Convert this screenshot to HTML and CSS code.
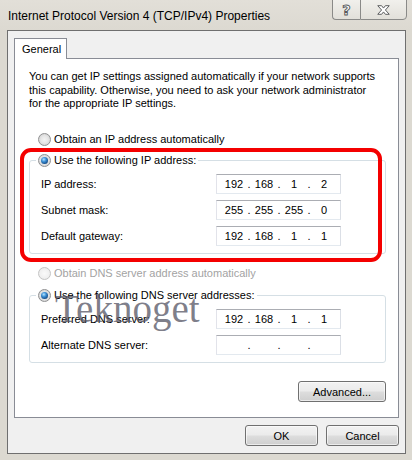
FILE: index.html
```html
<!DOCTYPE html>
<html>
<head>
<meta charset="utf-8">
<link rel="stylesheet" href="styles.css">
</head>
<body>
<div class="window">
  <div class="titlebar">
    <span class="title">Internet Protocol Version 4 (TCP/IPv4) Properties</span>
    <div class="caption-btns">
      <div class="cbtn help">
        <svg width="28" height="20" viewBox="0 0 28 20"><text x="14" y="15" text-anchor="middle" class="qmark">?</text></svg>
      </div>
      <div class="cbtn close">
        <svg width="47" height="20" viewBox="0 0 47 20"><path d="M17.5 5.5h4l2 2.5 2-2.5h4l-4 4.5 4 4.5h-4l-2-2.5-2 2.5h-4l4-4.5z" fill="#fff" stroke="#58595b" stroke-width="1" stroke-linejoin="round"/></svg>
      </div>
    </div>
  </div>
  <div class="client">
    <div class="tabs"><div class="tab">General</div></div>
    <div class="panel">
      <p class="intro">You can get IP settings assigned automatically if your network supports<br>this capability. Otherwise, you need to ask your network administrator<br>for the appropriate IP settings.</p>
      <div class="radio-row first"><span class="radio"></span>Obtain an IP address automatically</div>
      <fieldset class="group g1">
        <legend><span class="radio checked"></span>Use the following IP address:</legend>
        <div class="rows">
          <div class="row"><span class="lbl">IP address:</span><div class="ip"><span>192</span><i>.</i><span>168</span><i>.</i><span>1</span><i>.</i><span>2</span></div></div>
          <div class="row"><span class="lbl">Subnet mask:</span><div class="ip"><span>255</span><i>.</i><span>255</span><i>.</i><span>255</span><i>.</i><span>0</span></div></div>
          <div class="row"><span class="lbl">Default gateway:</span><div class="ip"><span>192</span><i>.</i><span>168</span><i>.</i><span>1</span><i>.</i><span>1</span></div></div>
        </div>
      </fieldset>
      <div class="radio-row dns disabled"><span class="radio"></span>Obtain DNS server address automatically</div>
      <fieldset class="group g2">
        <legend><span class="radio checked"></span>Use the following DNS server addresses:</legend>
        <div class="rows">
          <div class="row"><span class="lbl">Preferred DNS server:</span><div class="ip"><span>192</span><i>.</i><span>168</span><i>.</i><span>1</span><i>.</i><span>1</span></div></div>
          <div class="row"><span class="lbl">Alternate DNS server:</span><div class="ip"><span></span><i>.</i><span></span><i>.</i><span></span><i>.</i><span></span></div></div>
        </div>
      </fieldset>
      <div class="adv-row"><button class="btn adv">Advanced...</button></div>
    </div>
    <div class="footer">
      <button class="btn">OK</button>
      <button class="btn">Cancel</button>
    </div>
  </div>
  <div class="highlight"></div>
  <div class="watermark">Teknoget</div>
</div>
</body>
</html>
```
FILE: styles.css
```css
* { box-sizing: border-box; }
html, body { margin: 0; padding: 0; }
body {
  width: 412px;
  height: 460px;
  overflow: hidden;
  font-family: "Liberation Sans", Arial, sans-serif;
  font-size: 11px;
  color: #000;
}
.window {
  position: relative;
  width: 412px;
  height: 460px;
  background: #dcd9d1;
  display: flex;
  flex-direction: column;
}
.titlebar {
  height: 30px;
  display: flex;
  align-items: flex-start;
  padding: 0 5px 0 8px;
  background: linear-gradient(#e2dfd8, #dcd9d1);
}
.title {
  align-self: center;
  font-size: 12px;
  color: #000;
  margin-top: 1px;
}
.caption-btns {
  margin-left: auto;
  display: flex;
  height: 21px;
  margin-top: -1px;
}
.cbtn {
  height: 21px;
  border: 1px solid #8a8a88;
  background: linear-gradient(#f1f0ec, #e2e0da);
  display: flex;
  align-items: center;
  justify-content: center;
}
.cbtn.help {
  width: 28px;
  border-right: none;
  border-radius: 0 0 0 4px;
}
.cbtn.close {
  width: 47px;
  border-radius: 0 0 4px 0;
}
.qmark {
  font-family: "DejaVu Sans", sans-serif;
  font-size: 15px;
  font-weight: bold;
  fill: #fff;
  stroke: #5a5b5d;
  stroke-width: 1;
}
.client {
  flex: 1;
  margin: 0 6px 6px 7px;
  border: 1px solid #6f6f6f;
  background: #f0f0f0;
  padding: 7px 6px 7px 6px;
  display: flex;
  flex-direction: column;
}
.tabs {
  display: flex;
}
.tab {
  position: relative;
  z-index: 1;
  width: 53px;
  height: 21px;
  margin-bottom: -1px;
  border: 1px solid #898c95;
  border-bottom: none;
  background: #fff;
  padding: 4px 0 0 7px;
  line-height: 13px;
}
.panel {
  border: 1px solid #898c95;
  background: #fff;
  padding: 11px 0 15px 14px;
  display: flex;
  flex-direction: column;
}
.intro {
  margin: 0;
  line-height: 13.5px;
}
.radio-row {
  display: flex;
  align-items: center;
  height: 13px;
  line-height: 13px;
  padding-left: 9px;
}
.radio-row.first { margin-top: 22.5px; }
.radio-row.dns { margin-top: 13px; }
.disabled { color: #a3a3a3; }
.radio {
  width: 13px;
  height: 13px;
  border-radius: 50%;
  border: 1px solid #8f9091;
  background: radial-gradient(circle at 50% 50%, #f3f3f3 0, #e6e6e6 45%, #c9c9c9 100%);
  margin-right: 3px;
  flex: none;
  position: relative;
}
.disabled .radio {
  border-color: #c4c4c4;
  background: radial-gradient(circle at 50% 50%, #fafafa 0, #f0f0f0 60%, #e2e2e2 100%);
}
.radio.checked::after {
  content: "";
  position: absolute;
  left: 2px;
  top: 2px;
  width: 7px;
  height: 7px;
  border-radius: 50%;
  background: radial-gradient(circle at 40% 35%, #b5e6ff 0, #3f91d6 35%, #124a86 75%, #0b2d57 100%);
}
.group {
  margin: 8px 12px 0 0;
  border: 1px solid #d5dfe5;
  border-radius: 3px;
  padding: 7px 0 7px 11px;
  min-width: 0;
}
.g2 { margin-top: 9px; }
.group legend {
  display: flex;
  align-items: center;
  height: 13px;
  line-height: 13px;
  padding: 0 2px 0 2px;
  margin-left: -5px;
}
.rows {
  display: flex;
  flex-direction: column;
  gap: 6px;
}
.row {
  display: grid;
  grid-template-columns: 175px 125px;
  align-items: center;
  height: 20px;
}
.ip {
  height: 20px;
  border: 1px solid;
  border-color: #abadb3 #dbdfe6 #e3e9ef #e2e3ea;
  background: #fff;
  display: flex;
  align-items: center;
  padding: 0 2px 0 4px;
}
.ip span {
  width: 26px;
  text-align: center;
}
.ip i {
  font-style: normal;
  width: 4px;
  text-align: center;
}
.adv-row {
  display: flex;
  justify-content: flex-end;
  margin-top: 18px;
  padding-right: 12px;
}
.btn {
  font-family: "Liberation Sans", Arial, sans-serif;
  font-size: 11px;
  color: #000;
  height: 21px;
  width: 73px;
  border: 1px solid #707070;
  border-radius: 3px;
  background: linear-gradient(#f2f2f2 0%, #ebebeb 48%, #dddddd 52%, #cfcfcf 100%);
  box-shadow: inset 0 0 0 1px rgba(255,255,255,0.6);
  padding: 0;
}
.btn.adv { width: 88px; }
.footer {
  display: flex;
  justify-content: flex-end;
  gap: 8px;
  margin-top: 7px;
}
.highlight {
  position: absolute;
  left: 20px;
  top: 148px;
  width: 362px;
  height: 114px;
  border: 4px solid #f40000;
  border-radius: 11px;
  pointer-events: none;
}
.watermark {
  position: absolute;
  left: 55px;
  top: 289px;
  font-family: "Liberation Serif", "Times New Roman", serif;
  font-size: 39px;
  line-height: 39px;
  color: rgba(85, 85, 100, 0.75);
  pointer-events: none;
}
```
